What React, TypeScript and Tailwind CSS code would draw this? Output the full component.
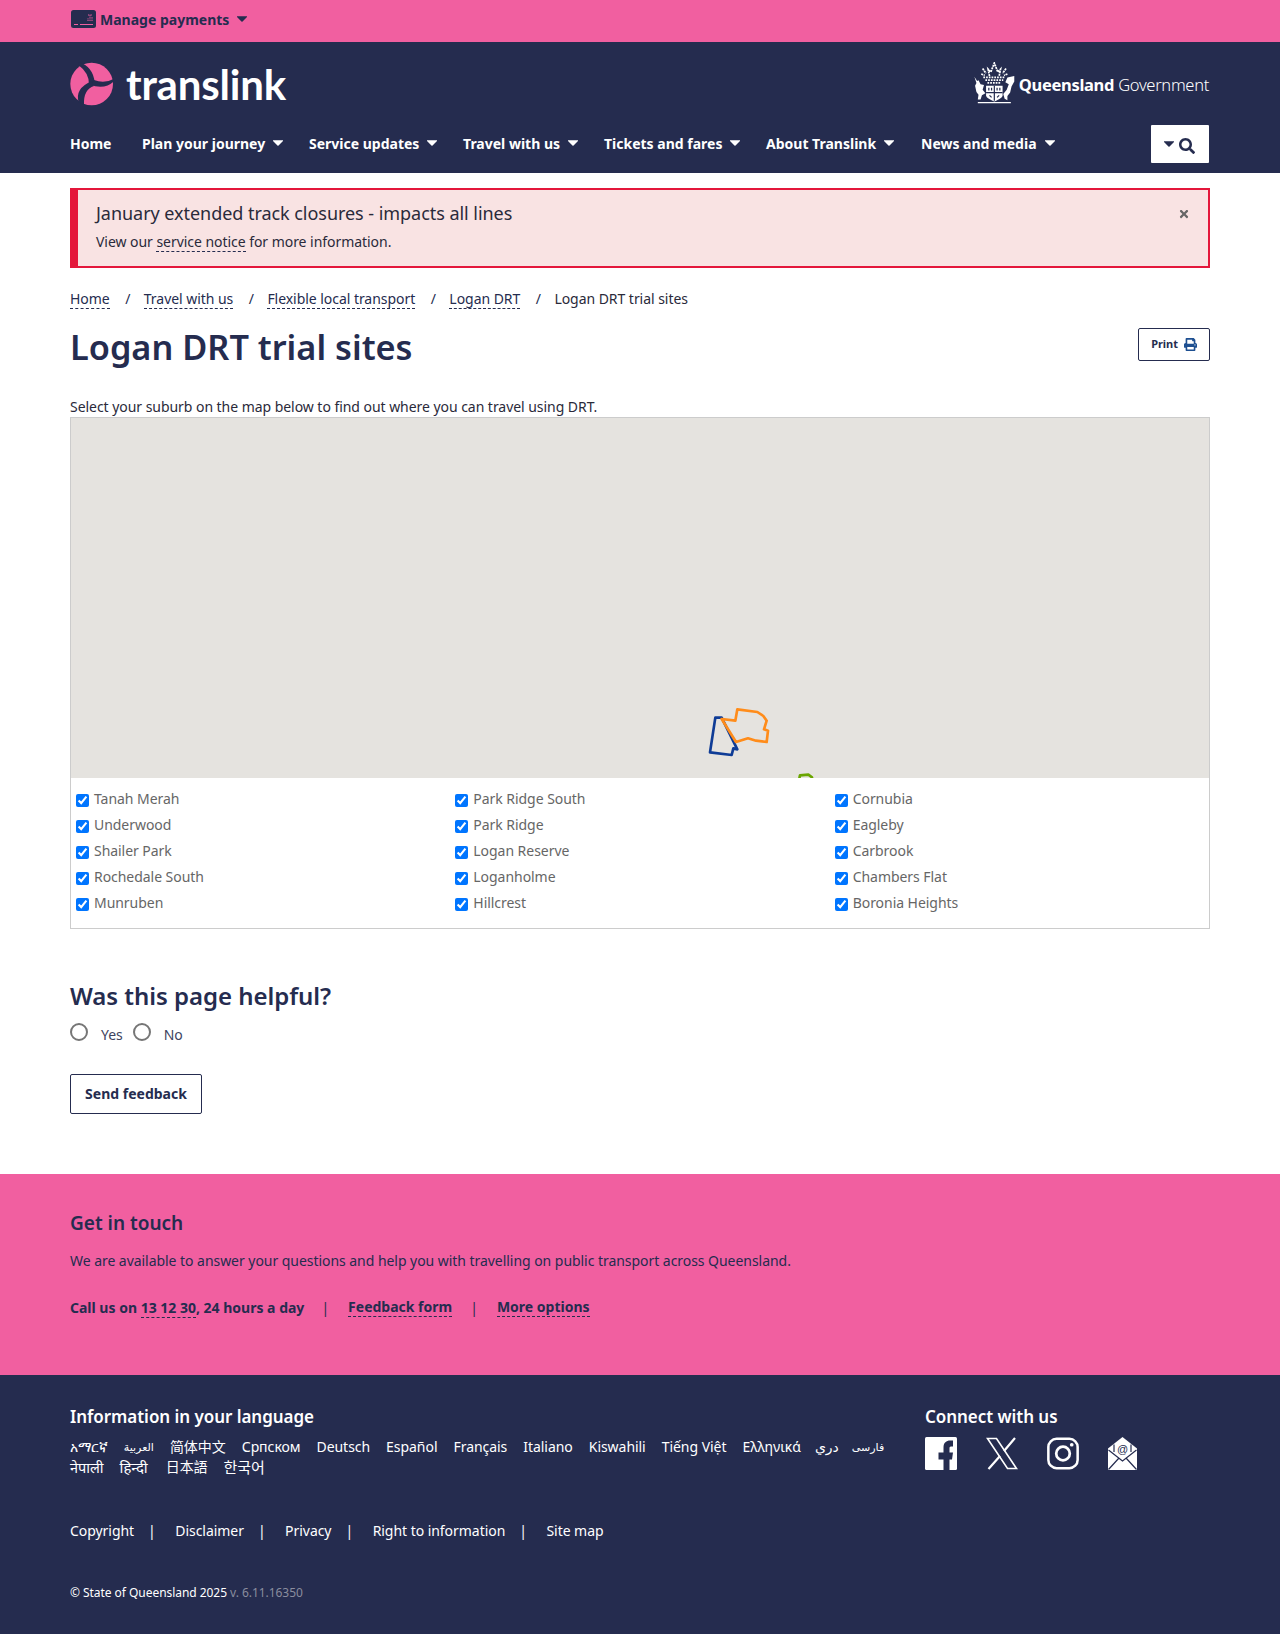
import React from "react";
import { FaPrint, FaSearch, FaTimes } from "react-icons/fa";

const Caret = ({ className = "" }: { className?: string }) => (
  <svg viewBox="0 0 10 6" className={`w-[10px] h-[6px] ${className}`} fill="currentColor"><path d="M0.2 0.3h9.6a.4.4 0 0 1 .3.7L5.3 5.7a.4.4 0 0 1-.6 0L-.1 1a.4.4 0 0 1 .3-.7z" /></svg>
);

const Dash = ({ children, className = "" }: { children: React.ReactNode; className?: string }) => (
  <a className={`border-b border-dashed border-[#252c4f] leading-[18px] ${className}`}>{children}</a>
);

const Slash = () => <span className="ml-[15.5px] mr-[13.5px] mb-[1px]">/</span>;

const nav = [
  ["Plan your journey", "w-[167px]"],
  ["Service updates", "w-[154px]"],
  ["Travel with us", "w-[141px]"],
  ["Tickets and fares", "w-[162px]"],
  ["About Translink", "w-[155px]"],
  ["News and media", "w-[150px]"],
];

const suburbs = [
  "Tanah Merah", "Park Ridge South", "Cornubia",
  "Underwood", "Park Ridge", "Eagleby",
  "Shailer Park", "Logan Reserve", "Carbrook",
  "Rochedale South", "Loganholme", "Chambers Flat",
  "Munruben", "Hillcrest", "Boronia Heights",
];

const langs: [string, string][] = [
  ["አማርኛ", ""], ["العربية", "text-[11px]"], ["简体中文", ""], ["Српском", ""], ["Deutsch", ""], ["Español", ""], ["Français", ""], ["Italiano", ""], ["Kiswahili", ""], ["Tiếng Việt", ""], ["Ελληνικά", ""], ["دري", "text-[14px] ml-[-2px]"], ["فارسی", "text-[11px] ml-[-3px]"],
  ["नेपाली", "text-[14.5px]"], ["हिन्दी", "text-[15px]"], ["日本語", "ml-[2px]"], ["한국어", "text-[15px]"],
];

const font = "font-['Noto_Sans','Noto_Sans_CJK_SC','DejaVu_Sans',sans-serif]";

export default function App() {
  return (
    <div className={`${font} text-[14px] tracking-[-0.045px] text-[#252c4f] bg-white w-full min-h-[1634px] flex flex-col`}>
      {/* top bar */}
      <div className="h-[42px] bg-[#f15fa0] px-[70px] flex items-center pb-[4px] tracking-normal">
        <svg viewBox="0 0 25 18" className="w-[25px] h-[18px] mr-[4px] ml-[1px]">
          <rect width="25" height="18" rx="2.5" fill="#252c4f" />
          <rect x="3" y="14" width="4" height="1" fill="#f15fa0" />
          <rect x="9" y="14" width="13" height="1" fill="#f15fa0" />
          <path d="M17 11v-3M19 11v-6M21 11v-4M17 5h4" stroke="#f15fa0" strokeWidth="1" strokeDasharray="1 0.6" />
        </svg>
        <span className="font-bold text-[14px]">Manage payments</span>
        <Caret className="ml-[8px]" />
      </div>

      {/* header */}
      <div className="h-[131px] bg-[#252c4f] px-[70px] text-white flex flex-col tracking-normal">
        <div className="h-[83px] flex items-center justify-between">
          <div className="flex items-center gap-[12px]">
            <svg viewBox="20 25 132 130" className="w-[44px] h-[44px]">
              <circle cx="85" cy="90" r="64" fill="#f15fa0" />
              <path d="M46 24Q90 38 94 86L77 92Q78 56 44 32Z" fill="#252c4f" />
              <path d="M156 78Q126 110 80 92L92 78Q124 90 152 74Z" fill="#252c4f" />
              <path d="M46 145Q34 104 84 82L92 96Q60 106 62 152Z" fill="#252c4f" />
            </svg>
            <span className="font-['Lato',sans-serif] font-bold text-[42px] leading-none tracking-[-0.2px]">translink</span>
          </div>
          <div className="flex items-center gap-[3px] mr-[1px]">
            <svg viewBox="20 15 125 125" className="w-[43px] h-[43px]" fill="none" stroke="#fff">
              <path d="M24 58l8 12 4-2 6 12 10 2-4 14 8 10-10 6-4 12h-8l2-14-6-8-4-18 4-8z" fill="#fff" stroke="none" />
              <path d="M140 56l-20 4-6 14 10 6-6 16-10 12 4 14 8 4v-12l8-10 4-18 8-14z" fill="#fff" stroke="none" />
              <path d="M58 84h48v28c0 8-14 14-24 18-10-4-24-10-24-18z" fill="#fff" stroke="none" />
              <path d="M82 84v44M58 104h48M66 90v8M74 90v8M90 90v8M98 90v8M68 112l6 6M96 112l-6 6" stroke="#252c4f" strokeWidth="3.5" />
              <path d="M50 60h64M56 68h52M62 76h40" strokeWidth="5" strokeDasharray="5 3" />
              <path d="M68 56l-4-20 8 8 10-26 10 26 8-8-4 20M48 34l10 14M116 34l-10 14M44 50l10 4M120 50l-10 4" strokeWidth="5" strokeDasharray="6 2" />
              <path d="M34 133h96" strokeWidth="4" />
            </svg>
            <span className="text-[16.5px] tracking-[-0.3px] mt-[3px]"><b className="font-bold">Queensland</b> <span className="font-light">Government</span></span>
          </div>
        </div>
        <div className="flex items-start justify-between">
          <nav className="flex items-center h-[38px] pb-[2px] font-bold text-[14px]">
            <a className="w-[72px]">Home</a>
            {nav.map(([n, w]) => (
              <a key={n} className={`flex items-center ${w}`}>{n}<Caret className="ml-[8px]" /></a>
            ))}
          </nav>
          <button className="w-[58px] h-[38px] mr-[1px] bg-white rounded-[1px] text-[#252c4f] flex items-center justify-center gap-[5px] pr-[2px]">
            <Caret className="mb-[1px] w-[9px]" />
            <FaSearch className="w-[16px] h-[16px] mt-[3px]" />
          </button>
        </div>
      </div>

      {/* main */}
      <div className="px-[70px] flex-1 flex flex-col">
        <div className="mt-[15px] h-[80px] bg-[#f9e3e3] border-2 border-l-8 border-[#e4173b] pl-[18px] pr-[18px] flex justify-between text-[#2a2a3a]">
          <div>
            <p className="text-[18px] leading-[26px] mt-[10px]">January extended track closures - impacts all lines</p>
            <p className="text-[14px] leading-[20px] mt-[6px]">View our <Dash>service notice</Dash> for more information.</p>
          </div>
          <FaTimes className="w-[12px] h-[12px] text-[#666] mt-[18px]" />
        </div>

        <div className="mt-[21px] flex items-center h-[20px] text-[14px]">
          <Dash>Home</Dash><Slash />
          <Dash>Travel with us</Dash><Slash />
          <Dash>Flexible local transport</Dash><Slash />
          <Dash>Logan DRT</Dash><Slash />
          <span className="text-[#2a2a3a] mb-[1px]">Logan DRT trial sites</span>
        </div>

        <div className="mt-[16px] flex justify-between items-start h-[75px]">
          <h1 className="text-[34.3px] leading-[44px] font-semibold tracking-normal">Logan DRT trial sites</h1>
          <button className="mt-[3px] w-[72px] h-[33px] border border-[#252c4f] rounded-[2px] flex items-center justify-center gap-[6px] text-[11px] font-bold">
            Print <FaPrint className="w-[13px] h-[13px] text-[#1d4f91]" />
          </button>
        </div>

        <p className="text-[14px] leading-[20px] h-[20px] mt-[-3px] text-[#2a2a3a]">Select your suburb on the map below to find out where you can travel using DRT.</p>

        <div className="border border-[#ccc] h-[512px] flex flex-col">
          <div className="relative h-[360px] bg-[#e5e3df] overflow-hidden">
            <svg viewBox="0 0 420 300" className="absolute left-[609px] top-[272px] w-[140px] h-[100px]" fill="none" strokeWidth="8" strokeLinejoin="round">
              <path d="M106 83L125 83L172 178L160 175L155 195L90 187Z" stroke="#0f3c96" />
              <path d="M125 87L166 92L172 58L232 66L250 78L260 92L252 118L264 122L260 156L228 152L204 145L168 156Z" stroke="#ff8c1a" />
              <path d="M357 270L360 256L385 254L396 262L397 275" stroke="#6aa500" />
            </svg>
          </div>
          <div className="grid grid-cols-3 pt-[7px]">
            {suburbs.map((s) => (
              <label key={s} className="h-[26px] pl-[5px] flex items-center text-[14px] text-[#666]">
                <input type="checkbox" defaultChecked className="m-0 mr-[5px] mt-[4px] w-[13px] h-[13px] accent-[#0075ff]" />
                <span>{s}</span>
              </label>
            ))}
          </div>
        </div>

        <h2 className="mt-[51px] text-[24px] leading-[32px] font-semibold">Was this page helpful?</h2>
        <div className="mt-[8px] flex items-center h-[24px] text-[14px] text-[#3d4360]">
          <input type="radio" name="h" className="appearance-none m-0 w-[18px] h-[18px] rounded-full border-2 border-[#767676] bg-white" />
          <span className="ml-[13px] mr-[10px] mt-[4px]">Yes</span>
          <input type="radio" name="h" className="appearance-none m-0 w-[18px] h-[18px] rounded-full border-2 border-[#767676] bg-white" />
          <span className="ml-[13px] mt-[4px]">No</span>
        </div>
        <button className="mt-[30px] w-[132px] h-[40px] pb-[2px] border border-[#252c4f] rounded-[2px] font-bold text-[14px] tracking-normal">Send feedback</button>
      </div>

      {/* pink footer */}
      <div className="h-[201px] bg-[#f15fa0] px-[70px] pt-[36px]">
        <h3 className="text-[19px] leading-[26px] font-semibold tracking-normal">Get in touch</h3>
        <p className="mt-[15px] text-[14px] leading-[20px]">We are available to answer your questions and help you with travelling on public transport across Queensland.</p>
        <div className="mt-[26px] flex items-center font-bold text-[14px] h-[20px] tracking-normal">
          <span>Call us on <Dash>13 12 30</Dash>, 24 hours a day</span>
          <span className="font-normal ml-[17px] mr-[19px]">|</span>
          <Dash>Feedback form</Dash>
          <span className="font-normal ml-[18px] mr-[19px]">|</span>
          <Dash>More options</Dash>
        </div>
      </div>

      {/* navy footer */}
      <div className="h-[259px] bg-[#252c4f] px-[70px] text-white pt-[30px]">
        <div className="flex">
          <div className="w-[855px]">
            <h3 className="text-[17px] leading-[24px] font-semibold">Information in your language</h3>
            <div className="mt-[8px] flex flex-wrap items-center gap-x-[16px] text-[14px] leading-[20px] w-[830px]">
              {langs.map(([l, c]) => <a key={l} className={c}>{l}</a>)}
            </div>
          </div>
          <div>
            <h3 className="text-[17px] leading-[24px] font-semibold">Connect with us</h3>
            <div className="mt-[8px] flex items-center gap-[29px]">
              <svg viewBox="0 0 32 33" className="w-[32px] h-[33px]">
                <rect width="32" height="33" rx="1.5" fill="#fff" />
                <path d="M18.5 33V22.5H13.5V15.5H18.5V10.5C18.5 5.5 21.5 3.5 25 3.5H28V9.5H26C24.5 9.5 24.5 10.5 24.5 11.5V15.5H28L27 22.5H24.5V33Z" fill="#252c4f" />
              </svg>
              <svg viewBox="0 0 32 33" className="w-[32px] h-[33px]" fill="none" stroke="#fff" strokeWidth="1.6">
                <path d="M1.5 1.5H10.5L30.5 31.5H21.5Z" />
                <path d="M29 1L18 14M14 19L2.5 32" strokeWidth="2.2" />
              </svg>
              <svg viewBox="0 0 33 33" className="w-[32px] h-[33px]" fill="none" stroke="#fff">
                <rect x="1.4" y="1.4" width="30.2" height="30.2" rx="8.5" strokeWidth="2.6" />
                <circle cx="16.5" cy="16.5" r="7" strokeWidth="2.8" />
                <circle cx="25.5" cy="7.5" r="1.9" fill="#fff" stroke="none" />
              </svg>
              <svg viewBox="0 0 29 33" className="w-[29px] h-[33px]">
                <path d="M14.5 0L29 11.5V33H0V11.5z" fill="#fff" />
                <path d="M0.5 13L14.5 24L28.5 13M0.5 32.5L11 21M28.5 32.5L18 21M6 7.5V15M23 7.5V15" fill="none" stroke="#252c4f" strokeWidth="1.2" />
                <text x="14.5" y="15.5" fontSize="11" textAnchor="middle" fill="#252c4f" fontFamily="Liberation Sans, sans-serif">@</text>
              </svg>
            </div>
          </div>
        </div>
        <div className="mt-[44px] flex items-center text-[14px] leading-[20px]">
          <a>Copyright</a><span className="ml-[14px] mr-[19.5px]">|</span>
          <a>Disclaimer</a><span className="ml-[14px] mr-[19.5px]">|</span>
          <a>Privacy</a><span className="ml-[14px] mr-[19.5px]">|</span>
          <a>Right to information</a><span className="ml-[14px] mr-[19.5px]">|</span>
          <a>Site map</a>
        </div>
        <p className="mt-[43px] text-[12px] leading-[18px]">© State of Queensland 2025 <span className="text-[#8a8d9e]">v. 6.11.16350</span></p>
      </div>
    </div>
  );
}
